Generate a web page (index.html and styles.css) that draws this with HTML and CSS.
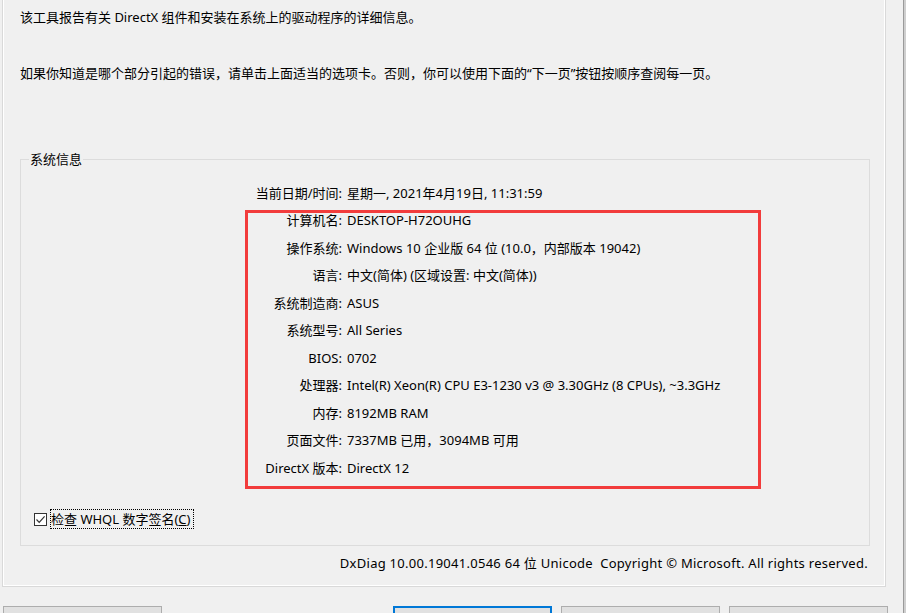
FILE: index.html
```html
<!DOCTYPE html>
<html lang="zh-CN">
<head>
  <meta charset="UTF-8">
  <title>DirectX 诊断工具</title>
  <link rel="stylesheet" href="styles.css">
</head>
<body>
  <div class="screen">
    <div class="main">
      <div class="tab-panel">
        <p class="intro">该工具报告有关 DirectX 组件和安装在系统上的驱动程序的详细信息。</p>
        <p class="intro">如果你知道是哪个部分引起的错误，请单击上面适当的选项卡。否则，你可以使用下面的“下一页”按钮按顺序查阅每一页。</p>

        <fieldset class="group">
          <legend>系统信息</legend>
          <div class="info">
            <div class="label">当前日期/时间:</div><div class="value">星期一, 2021年4月19日, 11:31:59</div>
            <div class="label">计算机名:</div><div class="value">DESKTOP-H72OUHG</div>
            <div class="label">操作系统:</div><div class="value">Windows 10 企业版 64 位 (10.0，内部版本 19042)</div>
            <div class="label">语言:</div><div class="value">中文(简体) (区域设置: 中文(简体))</div>
            <div class="label">系统制造商:</div><div class="value">ASUS</div>
            <div class="label">系统型号:</div><div class="value">All Series</div>
            <div class="label">BIOS:</div><div class="value">0702</div>
            <div class="label">处理器:</div><div class="value">Intel(R) Xeon(R) CPU E3-1230 v3 @ 3.30GHz (8 CPUs), ~3.3GHz</div>
            <div class="label">内存:</div><div class="value">8192MB RAM</div>
            <div class="label">页面文件:</div><div class="value">7337MB 已用，3094MB 可用</div>
            <div class="label">DirectX 版本:</div><div class="value">DirectX 12</div>
            <!-- red annotation frame drawn over the rows -->
            <div class="highlight"></div>
          </div>

          <label class="check">
            <span class="box">
              <svg width="11" height="11" viewBox="0 0 11 11"><polyline points="1.5,5.5 4.2,8.3 9.6,2.4" fill="none" stroke="#333" stroke-width="1.2"/></svg>
            </span>
            <span class="check-text">检查 WHQL 数字签名(<u>C</u>)</span>
          </label>
        </fieldset>

        <p class="version">DxDiag 10.00.19041.0546 64 位 Unicode&nbsp; Copyright © Microsoft. All rights reserved.</p>
      </div>

      <!-- only the top edge of the dialog buttons is in view -->
      <div class="buttons">
        <button class="button" aria-label="帮助(H)"></button>
        <button class="button default" aria-label="下一页(N)"></button>
        <button class="button" aria-label="保存所有信息(S)..."></button>
        <button class="button" aria-label="退出(X)"></button>
      </div>
    </div>
    <div class="edge"></div>
  </div>
</body>
</html>
```

FILE: styles.css
```css
body {
  margin: 0;
  height: 613px;
  overflow: hidden;
  background-color: #f0f0f0;
  color: #000;
  font-family: "Noto Sans", "Noto Sans CJK SC", sans-serif;
  font-size: 13px;
  line-height: 18px;
}

.screen {
  display: flex;
  height: 613px;
}

.main {
  width: 903px;
}

.edge {
  width: 3px;
  box-sizing: border-box;
  border-left: 1px solid #9a9a9a;
  background-color: #cfcfcf;
}

.tab-panel {
  margin-left: 2px;
  width: 884px;
  box-sizing: border-box;
  border: 1px solid #d9d9d9;
  border-top: 0;
  box-shadow: inset 1px 0 0 #fff, inset -1px 0 0 #fff, inset 0 -1px 0 #fff;
  padding: 8px 0 14px 17px;
}

.intro {
  margin: 0;
}

.intro + .intro {
  margin-top: 38px;
}

.group {
  margin: 68px 0 0;
  width: 850px;
  min-width: 0;
  box-sizing: border-box;
  border: 1px solid #dcdcdc;
  padding: 11px 0 16px;
}

.group legend {
  margin-left: 8px;
  padding: 0 1px;
  line-height: 18px;
}

.info {
  position: relative;
  display: grid;
  grid-template-columns: 321px 1fr;
  column-gap: 5px;
  grid-auto-rows: 27.5px;
  align-items: center;
}

.label {
  text-align: right;
  white-space: nowrap;
}

.value {
  white-space: nowrap;
}

.highlight {
  position: absolute;
  left: 224px;
  top: 31px;
  width: 516px;
  height: 279px;
  box-sizing: border-box;
  border: 3px solid #f23c3c;
}

.check {
  display: flex;
  align-items: center;
  height: 20px;
  margin: 27.5px 0 0 13px;
}

.box {
  display: flex;
  align-items: center;
  justify-content: center;
  width: 13px;
  height: 13px;
  box-sizing: border-box;
  border: 1px solid #333;
  background-color: #fff;
}

.check-text {
  margin-left: 3px;
  padding: 0 3px 0 0;
  border: 1px dotted #000;
  line-height: 18px;
}

.version {
  margin: 8px 0 0;
  width: 850px;
  box-sizing: border-box;
  padding-right: 2px;
  text-align: right;
  letter-spacing: 0.27px;
}

.buttons {
  display: flex;
  gap: 9px;
  width: 885px;
  margin: 19px 0 0 3px;
}

.button {
  width: 159px;
  height: 28px;
  box-sizing: border-box;
  border: 1px solid #adadad;
  background-color: #e1e1e1;
  padding: 0;
}

.button.default {
  margin-left: auto;
  border: 2px solid #0078d7;
}
```
